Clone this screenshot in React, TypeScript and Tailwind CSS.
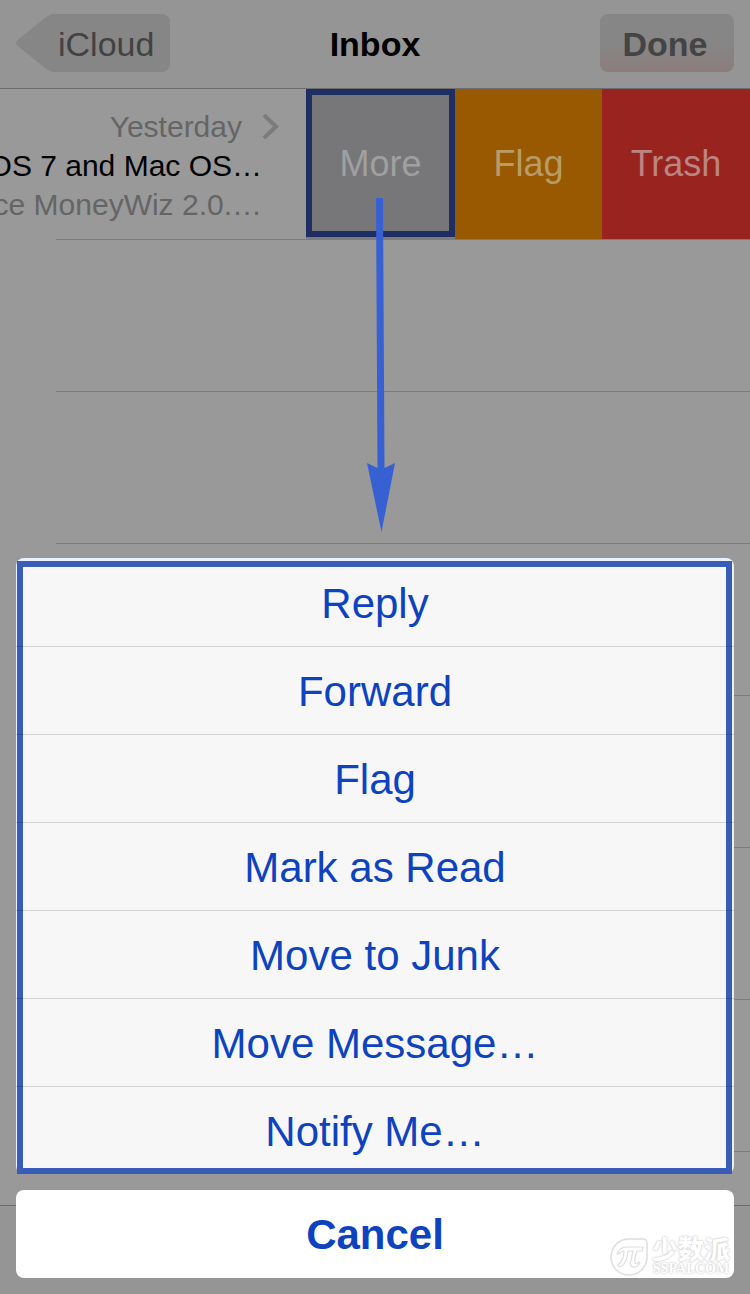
import React from 'react';

const SHEET_ACTIONS = [
  'Reply',
  'Forward',
  'Flag',
  'Mark as Read',
  'Move to Junk',
  'Move Message…',
  'Notify Me…',
];

const NavBar: React.FC = () => (
  <header className="grid grid-cols-[1fr_auto_1fr] items-center px-4 pt-3.5 pb-4 bg-[#959595] border-b border-[#6c6c6c]">
    <button className="relative justify-self-start h-[58px] w-[154px] pl-[42px] text-left text-[34px] leading-[60px] text-[#424242]">
      <svg className="absolute inset-0 w-full h-full" viewBox="0 0 154 58" fill="#868686" aria-hidden="true">
        <path d="M39 0H146a8 8 0 0 1 8 8V50a8 8 0 0 1-8 8H39Q34 58 29 54L3 33Q-3 29 3 25L29 4Q34 0 39 0Z" />
      </svg>
      <span className="relative">iCloud</span>
    </button>
    <h1 className="h-[58px] text-[34px] leading-[60px] font-bold text-black">Inbox</h1>
    <button className="justify-self-end h-[58px] w-[134px] pr-1 rounded-lg bg-linear-to-b from-[#868686] from-50% to-[#8c7c7c] text-[34px] leading-[60px] font-bold text-[#444444]">
      Done
    </button>
  </header>
);

const ArrowDown: React.FC = () => (
  <svg
    className="absolute z-10 top-[109px] left-1/2 -translate-x-1/2 w-[30px] h-[334px] pointer-events-none"
    viewBox="0 0 30 334"
    fill="#3761d3"
    aria-hidden="true"
  >
    <path d="M10 0H17L18.500 270L29 265L15.500 334L1 265L11.500 270Z" />
  </svg>
);

const MessageRow: React.FC = () => (
  <div className="flex h-[150px]">
    <div className="flex-1 min-w-0 overflow-hidden flex flex-col items-end pt-[18px] text-[30px] leading-[39px] whitespace-nowrap">
      <div className="flex items-center gap-5 pr-[26px] text-[#656565]">
        <span>Yesterday</span>
        <svg className="w-[18px] h-[26px]" viewBox="0 0 18 26" fill="none" stroke="#7b7b7b" strokeWidth="4" aria-hidden="true">
          <path d="M2 1L14 12.500L2 24" />
        </svg>
      </div>
      <p className="pr-11 text-black">OS 7 and Mac OS…</p>
      <p className="pr-11 text-[#656565]">ce MoneyWiz 2.0.…</p>
    </div>
    <div className="relative flex flex-col w-[149px] bg-[#7b7b80]">
      <button className="h-[148px] pt-0.5 border-[6px] border-[#1e2e63] bg-[#777779] text-4xl text-[#a0a0a2]">More</button>
      <ArrowDown />
    </div>
    <button className="w-[147px] bg-[#985900] text-4xl text-[#b99b67]">Flag</button>
    <button className="w-[148px] bg-[#99231f] text-4xl text-[#bb8583]">Trash</button>
  </div>
);

const Watermark: React.FC = () => (
  <div className="absolute right-1 bottom-0.5 flex items-end gap-1 text-white pointer-events-none [text-shadow:0_0_2px_#ccc,0_0_2px_#ccc]">
    <svg className="w-[38px] h-[38px]" viewBox="0 0 38 38" fill="none" stroke="#dedede" aria-hidden="true">
      <path d="M19 1H33Q37 1 37 5V19A18 18 0 1 1 19 1Z" strokeWidth="1.5" />
      <g strokeLinejoin="round" strokeWidth="1.200" fill="#fff">
        <path d="M7 16Q10 9 16 9H33L32 13H27Q24 22 25 25Q26 27 29 24L30 25Q27 30 23 29Q19 28 21 22L23 13H18Q17 24 12 28Q9 30 8 27Q14 22 14 13Q11 13 9 16Z" />
      </g>
    </svg>
    <span className="flex flex-col">
      <span className="font-['Noto_Sans_CJK_SC',sans-serif] text-[26px] leading-[28px] font-black">少数派</span>
      <span className="font-['Liberation_Serif',serif] text-sm leading-[14px] font-bold">SSPAI.COM</span>
    </span>
  </div>
);

const ActionSheet: React.FC = () => (
  <div className="absolute inset-x-4 bottom-4 z-20 flex flex-col gap-4 text-[42px] text-[#0d43be]">
    <div className="relative flex flex-col rounded-lg bg-[#eaf3fd]">
      {/* Highlight frame around the group */}
      <div className="absolute top-[3px] bottom-0 left-px right-0.5 border-[6px] border-[#385cb8] bg-[#f7f7f7]"></div>
      {SHEET_ACTIONS.map((label) => (
        <button key={label} className="relative h-[88px] pt-px border-t border-black/15 first-of-type:border-transparent">
          {label}
        </button>
      ))}
    </div>
    <button className="relative h-[88px] rounded-lg bg-white font-bold">
      Cancel
      <Watermark />
    </button>
  </div>
);

export default function App() {
  return (
    <div className="relative flex flex-col min-h-screen overflow-hidden bg-[#999999] font-['Liberation_Sans',Arial,sans-serif]">
      <NavBar />
      <main className="flex-1">
        <MessageRow />
        <div className="ml-14 border-t border-[#7b7b7d]">
          {[1, 2, 3, 4, 5, 6].map((n) => (
            <div key={n} className="h-[152px] border-b border-[#7b7b7d]"></div>
          ))}
        </div>
      </main>
      <footer className="h-[89px] border-t border-[#6c6c6c] bg-[#959595]"></footer>
      <ActionSheet />
    </div>
  );
}
